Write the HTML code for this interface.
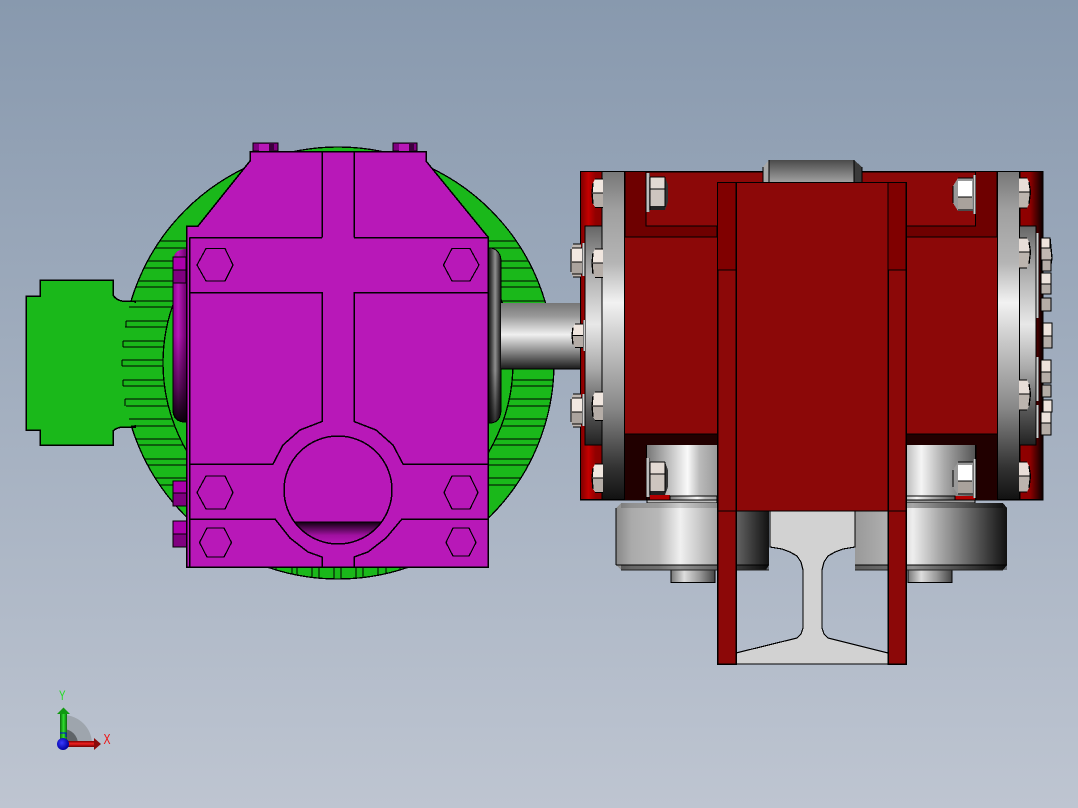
<!DOCTYPE html>
<html><head><meta charset="utf-8"><style>
html,body{margin:0;padding:0;width:1078px;height:808px;overflow:hidden;background:#a0adbe}
svg{display:block}
</style></head><body>
<svg width="1078" height="808" viewBox="0 0 1078 808" xmlns="http://www.w3.org/2000/svg" font-family="'Liberation Sans',sans-serif">
<defs>
<linearGradient id="bg" x1="0" y1="0" x2="0" y2="1"><stop offset="0" stop-color="#8899ae"/><stop offset="1" stop-color="#bec5d1"/></linearGradient>
<linearGradient id="flange" gradientUnits="userSpaceOnUse" x1="0" y1="171" x2="0" y2="500"><stop offset="0" stop-color="#777"/><stop offset=".12" stop-color="#a0a0a0"/><stop offset=".28" stop-color="#b5b5b5"/><stop offset=".4" stop-color="#f2f2f2"/><stop offset=".52" stop-color="#c8c8c8"/><stop offset=".72" stop-color="#888"/><stop offset=".9" stop-color="#333"/><stop offset="1" stop-color="#111"/></linearGradient>
<linearGradient id="flange2" gradientUnits="userSpaceOnUse" x1="0" y1="226" x2="0" y2="445"><stop offset="0" stop-color="#666"/><stop offset=".2" stop-color="#aaa"/><stop offset=".45" stop-color="#e8e8e8"/><stop offset=".65" stop-color="#aaa"/><stop offset=".85" stop-color="#555"/><stop offset="1" stop-color="#222"/></linearGradient>
<linearGradient id="shaft" x1="0" y1="0" x2="0" y2="1"><stop offset="0" stop-color="#777"/><stop offset=".2" stop-color="#999"/><stop offset=".48" stop-color="#f0f0f0"/><stop offset=".7" stop-color="#999"/><stop offset=".9" stop-color="#444"/><stop offset="1" stop-color="#1a1a1a"/></linearGradient>
<linearGradient id="seal" x1="0" y1="0" x2="1" y2="0"><stop offset="0" stop-color="#fff"/><stop offset=".1" stop-color="#222"/><stop offset=".3" stop-color="#555"/><stop offset=".55" stop-color="#a0a0a0"/><stop offset="1" stop-color="#151515"/></linearGradient>
<linearGradient id="sealv" x1="0" y1="0" x2="0" y2="1"><stop offset="0" stop-color="#000" stop-opacity=".1"/><stop offset=".7" stop-color="#000" stop-opacity=".1"/><stop offset="1" stop-color="#000" stop-opacity=".7"/></linearGradient>
<linearGradient id="purc" x1="0" y1="0" x2="1" y2="0"><stop offset="0" stop-color="#900090"/><stop offset=".4" stop-color="#b818b8"/><stop offset="1" stop-color="#700070"/></linearGradient>
<linearGradient id="purv" x1="0" y1="0" x2="0" y2="1"><stop offset="0" stop-color="#000" stop-opacity="0"/><stop offset=".5" stop-color="#000" stop-opacity="0"/><stop offset=".8" stop-color="#000" stop-opacity=".5"/><stop offset="1" stop-color="#000" stop-opacity=".95"/></linearGradient>
<linearGradient id="moon" x1="0" y1="0" x2="0" y2="1"><stop offset="0" stop-color="#100010"/><stop offset=".6" stop-color="#a010a0"/><stop offset="1" stop-color="#b818b8"/></linearGradient>
<linearGradient id="redL" x1="0" y1="0" x2="1" y2="0"><stop offset="0" stop-color="#800000"/><stop offset=".35" stop-color="#c40000"/><stop offset=".7" stop-color="#900000"/><stop offset="1" stop-color="#8c0000"/></linearGradient>
<linearGradient id="redR" x1="0" y1="0" x2="1" y2="0"><stop offset="0" stop-color="#900000"/><stop offset=".45" stop-color="#8c0000"/><stop offset="1" stop-color="#080000"/></linearGradient>
<linearGradient id="cylL" x1="0" y1="0" x2="1" y2="0"><stop offset="0" stop-color="#777"/><stop offset=".3" stop-color="#bbb"/><stop offset=".58" stop-color="#fafafa"/><stop offset=".75" stop-color="#bbb"/><stop offset="1" stop-color="#999"/></linearGradient>
<linearGradient id="cylR" x1="0" y1="0" x2="1" y2="0"><stop offset="0" stop-color="#bbb"/><stop offset=".22" stop-color="#f5f5f5"/><stop offset=".55" stop-color="#aaa"/><stop offset="1" stop-color="#555"/></linearGradient>
<linearGradient id="whL" gradientUnits="userSpaceOnUse" x1="616" y1="0" x2="769" y2="0"><stop offset="0" stop-color="#888"/><stop offset=".1" stop-color="#aaa"/><stop offset=".28" stop-color="#b8b8b8"/><stop offset=".42" stop-color="#f0f0f0"/><stop offset=".65" stop-color="#a8a8a8"/><stop offset=".78" stop-color="#666"/><stop offset="1" stop-color="#111"/></linearGradient>
<linearGradient id="whR" gradientUnits="userSpaceOnUse" x1="855" y1="0" x2="1007" y2="0"><stop offset="0" stop-color="#999"/><stop offset=".22" stop-color="#b0b0b0"/><stop offset=".38" stop-color="#eee"/><stop offset=".55" stop-color="#aaa"/><stop offset=".85" stop-color="#444"/><stop offset="1" stop-color="#111"/></linearGradient>
<linearGradient id="subc" x1="0" y1="0" x2="1" y2="0"><stop offset="0" stop-color="#777"/><stop offset=".3" stop-color="#ddd"/><stop offset=".65" stop-color="#999"/><stop offset="1" stop-color="#444"/></linearGradient>
<linearGradient id="lug" x1="0" y1="0" x2="0" y2="1"><stop offset="0" stop-color="#4a4a4a"/><stop offset="1" stop-color="#a0a0a0"/></linearGradient>
<linearGradient id="wash" x1="0" y1="0" x2="1" y2="0"><stop offset="0" stop-color="#333"/><stop offset=".5" stop-color="#eee"/><stop offset="1" stop-color="#222"/></linearGradient>
<linearGradient id="triG" x1="0" y1="0" x2="1" y2="0"><stop offset="0" stop-color="#0b6b0b"/><stop offset=".5" stop-color="#2ee02e"/><stop offset="1" stop-color="#0b6b0b"/></linearGradient>
<linearGradient id="triR" x1="0" y1="0" x2="0" y2="1"><stop offset="0" stop-color="#800000"/><stop offset=".45" stop-color="#f02020"/><stop offset="1" stop-color="#700000"/></linearGradient>
<radialGradient id="triB" cx=".4" cy=".4" r=".6"><stop offset="0" stop-color="#3a3aff"/><stop offset="1" stop-color="#0000a0"/></radialGradient>

<g id="n1"><path d="M1 4 L3 0 H11 V14 H0 Z" fill="#f0e6df"/><path d="M0 14 H11 V28 H3 L1 25 Z" fill="#b5ada7"/><path d="M3 0 H11 M0 14 H11 M3 28.500 H11 M1 4 L0 14 L1 25" fill="none" stroke="#000" stroke-width="1.300"/></g>
<g id="n1r"><path d="M0 0 H8 L10 4 L11 14 H0 Z" fill="#e8ded8"/><path d="M0 14 H11 L10 26 L8 30 H0 Z" fill="#bcb4ae"/><path d="M0 0 H8 M0 14 H11 M0 30 H8 M10 4 L11.500 14 L10 26" fill="none" stroke="#000" stroke-width="1.300"/></g>
<g id="n2"><path d="M2 0 H10 V33 H2 L0 28 V5 Z" fill="#c0b8b2"/><path d="M2 4 H11 V18 H1 V6 Z" fill="#f2e8e1"/><path d="M1 18 H11 V30 H1Z" fill="#aba39d"/><path d="M2 0 H10 M1 4 H11 M1 18 H11 M1 30 H11 M2 33 H10 M0 5 V28" fill="none" stroke="#000" stroke-width="1.300"/></g>
<g id="cl"><rect x="-4" y="-4" width="4" height="39" fill="url(#wash)"/><path d="M0 0 H15 L18 8 V25 L15 33 H0 Z" fill="#333"/><path d="M0 0 H15 V12 H0Z" fill="#e2d9d3"/><path d="M0 12 H15 V29 H0Z" fill="#cdc5bf"/><path d="M0 29 H15 V33 H0Z" fill="#222"/><path d="M0 0 H15 M0 12 H15 M15 0 V30 M0 0 V33" fill="none" stroke="#000" stroke-width="1.300"/></g>
<g id="cr"><rect x="20" y="-3" width="3" height="39" fill="url(#wash)"/><path d="M5 0 H20 V33 H5 L0 25 V8 Z" fill="#999"/><path d="M5 3 H19 V19 H5Z" fill="#fff"/><path d="M5 19 H19 V31 H5Z" fill="#a9a29c"/><path d="M5 0 H20 M5 19 H19 M5 32 H20 M0 8 V25" fill="none" stroke="#000" stroke-width="1.300"/></g>
</defs>

<rect width="1078" height="808" fill="url(#bg)"/>

<g shape-rendering="crispEdges">
<!-- green motor -->
<circle cx="338" cy="363" r="216" fill="#1ab81a" stroke="#000" stroke-width="1.300"/>
<path d="M26 296 H40 V280 H113 V295 Q116 300 122 301 H135 V427 H122 Q116 428 113 431 V445 H40 V430 H26 Z" fill="#1ab81a" stroke="#000" stroke-width="1.500"/>
<rect x="112" y="303" width="40" height="122" fill="#1ab81a"/>
<circle cx="338" cy="363" r="175" fill="#1ab81a" stroke="#000" stroke-width="1.300"/>
<path fill="none" stroke="#000" stroke-width="1.300" d="
M160 241H212M155 248H206M148 261H196M144 268H191M138 281H183M136 287H180M131 301H174M129 307H172M126 321H168M125 327H167M123 341H164M123 347H164M122 360H163M122 366H163M123 380H164M123 386H164M125 399H167M126 406H168M129 419H172M131 426H175M136 439H180M138 445H183M144 459H192M148 465H196M155 478H206M160 485H212
M516 241H463M521 248H470M528 261H480M532 268H485M538 281H493M540 287H496M545 301H502
M553 380H512M553 386H511M551 399H509M550 406H508M547 419H504M545 426H501M540 439H496M538 445H493M531 459H484M528 465H480M521 478H470M516 485H463
M126 321V327M123 341V347M122 360V366M123 380V386M125 399V406
M276 567V570M292 567V574M297 567V575M312 567V577M319 567V578M334 567V579M341 567V579M356 567V578M363 567V577M378 567V575M386 567V573M400 567V570"/>

<!-- left purple cylinder -->
<path d="M173 262 Q173 249 186 249 V422 H186 Q173 422 173 409 Z" fill="url(#purc)"/>
<path d="M173 262 Q173 249 186 249 V422 H186 Q173 422 173 409 Z" fill="url(#purv)"/>
<path d="M173 283 V409 Q173 422 186 422" fill="none" stroke="#000" stroke-width="1.300"/>
<rect x="173" y="257" width="13" height="13" fill="#ad00ad" stroke="#000"/>
<rect x="173" y="270" width="13" height="13" fill="#800080" stroke="#000"/>

<!-- right seal -->
<path d="M488 248 H491 Q501 250 501 262 V409 Q501 422 491 423 H488 Z" fill="url(#seal)"/>
<path d="M488 248 H491 Q501 250 501 262 V409 Q501 422 491 423 H488 Z" fill="url(#sealv)" stroke="#000"/>

<!-- shaft -->
<rect x="501" y="303" width="84" height="66" fill="url(#shaft)"/>
<path d="M501 369 H585" stroke="#000"/>

<!-- lugs -->
<rect x="173" y="481" width="14" height="12" fill="#ad00ad" stroke="#000"/>
<rect x="173" y="493" width="14" height="13" fill="#800080" stroke="#000"/>
<rect x="173" y="521" width="14" height="13" fill="#ad00ad" stroke="#000"/>
<rect x="173" y="534" width="14" height="13" fill="#800080" stroke="#000"/>

<!-- top bolts -->
<rect x="253" y="143" width="25" height="8" fill="#800080" stroke="#000"/>
<rect x="259" y="144" width="10" height="7" fill="#b818b8"/><rect x="269" y="144" width="5" height="7" fill="#3c003c"/>
<rect x="393" y="143" width="24" height="8" fill="#800080" stroke="#000"/>
<rect x="399" y="144" width="10" height="7" fill="#b818b8"/><rect x="409" y="144" width="5" height="7" fill="#3c003c"/>

<!-- purple body -->
<path d="M250 151.500 H426 V161 L488 237 V567 H186.500 V226 H198 L250 161 Z" fill="#b818b8" stroke="#000" stroke-width="1.500"/>
<path fill="none" stroke="#000" stroke-width="1.500" d="M189.500 237.500 V567
M189.500 237.500 H322 M354 237.500 H488
M322 152 V237.500 M354 152 V237.500
M189.500 292.500 H322 V421.500 L300 430 L283 445 L273 464 H189.500
M488 292.500 H354 V421.500 L376 430 L393 445 L403 464 H488
M189.500 519 H275 L290 538 L308 552 L322 557 V567
M488 519 H402 L386 538 L368 552 L354 557 V567"/>
<path d="M294.500 522 H381.500 A54 54 0 0 1 294.500 522 Z" fill="url(#moon)"/>
<circle cx="338" cy="490" r="54" fill="none" stroke="#000" stroke-width="1.500"/>
<path d="M294.500 522 H381.500" stroke="#000" stroke-width="1.300"/>
<g fill="none" stroke="#000" stroke-width="1.200">
<polygon points="197,265 206,248.500 225,248.500 233,265 225,281 206,281"/>
<polygon points="443.500,265 452,248.500 470,248.500 479,265 470,281 452,281"/>
<polygon points="197,492.500 206,476 225,476 233,492.500 225,509 206,509"/>
<polygon points="444,492.500 452,476 470,476 478,492.500 470,509 452,509"/>
<polygon points="199.500,542.500 207,528 224,528 231.500,542.500 224,557 207,557"/>
<polygon points="446,542.500 453,528 469,528 476,542.500 469,556 453,556"/>
</g>

<!-- red assembly base -->
<rect x="580.500" y="171.500" width="462" height="328" fill="#8c0808" stroke="#000" stroke-width="1.500"/>
<rect x="581" y="172" width="21" height="327" fill="url(#redL)"/>
<rect x="1020" y="172" width="23" height="327" fill="url(#redR)"/>
<path d="M602 171 V500 M1020 171 V500" stroke="#000"/>

<!-- dark corners -->
<path d="M625 171.500 H646 V226 H717 V237 H625 Z" fill="#6e0000" stroke="#000" stroke-width="1.300"/>
<path d="M997 171.500 H975.500 V226 H906 V237 H997 Z" fill="#6e0000" stroke="#000" stroke-width="1.300"/>
<rect x="625" y="434" width="92" height="66" fill="#210000"/>
<rect x="906" y="434" width="91" height="66" fill="#210000"/>
<path d="M625 434 H717 M906 434 H997" stroke="#000"/>

<!-- lower cylinders -->
<rect x="647" y="445" width="70" height="51" fill="url(#cylL)"/>
<rect x="906" y="445" width="69" height="51" fill="url(#cylR)"/>
<rect x="646" y="445" width="1" height="55" fill="#000"/><rect x="975" y="445" width="1.500" height="55" fill="#000"/>
<rect x="650" y="495" width="20" height="5" fill="#b00000"/><rect x="955" y="496" width="20" height="4" fill="#b00000"/>
<rect x="670" y="496" width="47" height="4" fill="url(#cylL)" stroke="#000" stroke-width=".8"/>
<rect x="906" y="496" width="49" height="4" fill="url(#cylR)" stroke="#000" stroke-width=".8"/>
<rect x="647" y="500" width="70" height="3" fill="#bbb" stroke="#000" stroke-width=".8"/>
<rect x="906" y="500" width="69" height="3" fill="#999" stroke="#000" stroke-width=".8"/>

<!-- flanges -->
<rect x="585" y="226" width="17" height="219" fill="url(#flange2)" stroke="#000" stroke-width="1"/>
<rect x="1019.500" y="226" width="16.500" height="219" fill="url(#flange2)" stroke="#000" stroke-width="1"/>
<rect x="602" y="171.500" width="22.500" height="328" fill="url(#flange)" stroke="#000" stroke-width="1.300"/>
<rect x="997.500" y="171.500" width="22" height="328" fill="url(#flange)" stroke="#000" stroke-width="1.300"/>

<!-- wheels -->
<rect x="671" y="570" width="44" height="12.500" fill="url(#subc)" stroke="#000" stroke-width="1"/>
<rect x="908" y="570" width="44" height="12.500" fill="url(#subc)" stroke="#000" stroke-width="1"/>
<path d="M616 508 L621 503 H769 V565 L766 570 H621 L616 565 Z" fill="url(#whL)"/>
<path d="M855 503 H1003 L1007 508 V565 L1003 570 H855 Z" fill="url(#whR)"/>
<rect x="621" y="503" width="96" height="5" fill="#000" opacity=".15"/>
<rect x="906" y="503" width="97" height="5" fill="#000" opacity=".3"/>
<rect x="855" y="565" width="152" height="5" fill="#000" opacity=".4"/>
<rect x="621" y="565" width="148" height="5" fill="#000" opacity=".4"/>
<path d="M616 508 V565 M616 565 H769 M855 565 H1007" fill="none" stroke="#000" stroke-width="1.300"/>
<path d="M621 570 H769 M855 570 H1003" stroke="#222"/>

<!-- rail -->
<path d="M770 511 V547 L782 549 L790 552 L797 556 L801 562 L803 570 V628 L801 634 L797 638 L736 653 V664 H888 V653 L828 638 L824 634 L822 628 V570 L824 562 L828 556 L835 552 L843 549 L855 547 V511 Z" fill="#d2d2d2" stroke="#000" stroke-width="1.200"/>

<!-- top lug -->
<path d="M763 182 V167 L769 160 H854 L862 167 V182 Z" fill="url(#lug)"/>
<path d="M763 167 L769 160 V182 H763 Z" fill="#a8a8a8"/>
<path d="M854 160 L862 167 V182 H854 Z" fill="#3a3a3a"/>
<path d="M763 182 V167 M769 160 V182 M854 160 V182 M862 167 V182" fill="none" stroke="#000" stroke-width="1.300"/>

<!-- center plates -->
<rect x="736" y="182.500" width="152" height="328.500" fill="#8c0808" stroke="#000" stroke-width="1.300"/>
<rect x="717.500" y="182.500" width="18.500" height="481.500" fill="#8c0808" stroke="#000" stroke-width="1.500"/>
<rect x="888" y="182.500" width="18" height="481.500" fill="#8c0808" stroke="#000" stroke-width="1.500"/>
<rect x="718" y="183" width="18" height="87" fill="#800000"/>
<rect x="888.500" y="183" width="17" height="87" fill="#800000"/>
<path d="M717.500 270 H736 M888 270 H906 M717.500 511 H736 M888 511 H906 M717.500 182.500 H906 M717.500 664 H906 M736 182 V511 M888 182 V511" stroke="#000" stroke-width="1.300"/>

<!-- nuts -->
<use href="#n1" x="592" y="179"/><use href="#n1" x="592" y="249"/><use href="#n1" x="592" y="392"/><use href="#n1" x="592" y="464"/>
<use href="#n1r" x="1019" y="178"/><use href="#n1r" x="1019" y="238"/><use href="#n1r" x="1019" y="380"/><use href="#n1r" x="1019" y="462"/>
<use href="#n2" x="571" y="244"/><use href="#n2" x="571" y="394"/>
<rect x="582" y="243" width="3" height="33" fill="url(#wash)"/><rect x="582" y="394" width="3" height="32" fill="url(#wash)"/>
<g transform="translate(572,324) scale(1,.82)"><use href="#n1"/></g><rect x="583" y="320" width="3" height="31" fill="url(#wash)"/>
<use href="#cl" x="650" y="177"/><use href="#cl" x="650" y="462"/>
<use href="#cr" x="953" y="178"/><use href="#cr" x="953" y="462"/>

<!-- right outer nuts -->
<rect x="1036" y="233" width="3" height="42" fill="url(#wash)"/>
<rect x="1036" y="270" width="3" height="48" fill="url(#wash)"/>
<rect x="1036" y="357" width="3" height="44" fill="url(#wash)"/>
<rect x="1036" y="405" width="3" height="33" fill="url(#wash)"/>
<g stroke="#000" stroke-width="1.300">
<path d="M1041 238 H1050 L1052 258 L1050 270 H1041Z" fill="#c0b8b2"/><rect x="1041" y="238" width="9" height="10" fill="#ede3dc"/>
<rect x="1042" y="260" width="9" height="11" fill="#b5ada7"/>
<rect x="1041" y="273" width="10" height="11" fill="#ede3dc"/><rect x="1041" y="284" width="10" height="10" fill="#b5ada7"/>
<rect x="1041" y="298" width="10" height="13" fill="#b5ada7"/>
<rect x="1043" y="323" width="9" height="13" fill="#ede3dc"/><rect x="1043" y="336" width="9" height="12" fill="#b5ada7"/>
<rect x="1041" y="360" width="10" height="12" fill="#ede3dc"/><rect x="1041" y="372" width="10" height="11" fill="#b5ada7"/>
<rect x="1042" y="385" width="9" height="12" fill="#b5ada7"/>
<rect x="1043" y="400" width="9" height="12" fill="#ede3dc"/>
<rect x="1041" y="412" width="10" height="11" fill="#ede3dc"/><rect x="1041" y="423" width="10" height="12" fill="#b5ada7"/>
</g>
</g>

<!-- triad -->
<path d="M63 715 A29 29 0 0 1 92 744 H63 Z" fill="#9ea5ad"/>
<path d="M63 729 A15 15 0 0 1 78 744 H63 Z" fill="#5f6468"/>
<rect x="60" y="714" width="7" height="30" fill="url(#triG)"/>
<path d="M57 714 L63.500 707.500 L70 714 Z" fill="#119911"/>
<path d="M60 733 H66 V737" fill="none" stroke="#0000e0" stroke-width="1"/>
<rect x="63" y="741" width="31" height="6" fill="url(#triR)"/>
<path d="M94 738 L101 744 L94 750 Z" fill="#8a0a0a"/>
<circle cx="63" cy="744" r="6" fill="url(#triB)"/>
<text transform="translate(59,700) scale(.7,1)" font-size="14" fill="#22dd22">Y</text>
<text transform="translate(103.500,744) scale(.7,1)" font-size="15" fill="#ee1111">X</text>
</svg>
</body></html>
